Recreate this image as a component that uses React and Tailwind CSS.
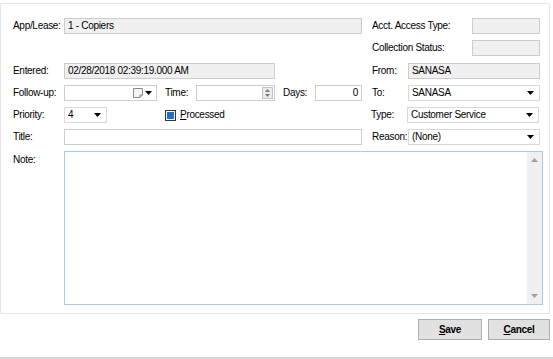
import React from "react";

const Arrow = () => (
  <svg width="7" height="4" viewBox="0 0 7 4" className="shrink-0">
    <path d="M0 0H7L3.5 4Z" fill="#000" />
  </svg>
);

function Label({ w, children, className = "" }) {
  return (
    <div className={`shrink-0 text-[#000] whitespace-nowrap ${className}`} style={{ width: w }}>
      {children}
    </div>
  );
}

function Box({ w, children, disabled, className = "" }) {
  return (
    <div
      className={`shrink-0 h-[16px] border flex items-center px-[3px] ${
        disabled ? "bg-[#f0f0f0] border-[#cccccc]" : "bg-white border-[#cdcdcd]"
      } ${className}`}
      style={{ width: w }}
    >
      {children}
    </div>
  );
}

function Select({ w, value }) {
  return (
    <div
      className="shrink-0 h-[16px] border border-[#d9d9d9] bg-white flex items-center justify-between pl-[3px] pr-[5px]"
      style={{ width: w }}
    >
      <span>{value}</span>
      <Arrow />
    </div>
  );
}

export default function App() {
  return (
    <div
      className="w-[553px] h-[359px] bg-white relative overflow-hidden text-[10px] leading-[12px] tracking-[-0.3px] text-black"
      style={{ fontFamily: "'Liberation Sans', Arial, sans-serif" }}
    >
      <div className="pt-[3px]">
        <div className="w-[550px] h-[311px] border border-[#dfe6ec] rounded-tr-[2px] pl-[12px] pt-[14px]">
          {/* Row 1 */}
          <div className="flex items-center h-[16px]">
            <Label w={51}>App/Lease:</Label>
            <Box w={298} disabled>1 - Copiers</Box>
            <Label w={100} className="ml-[10px]">Acct. Access Type:</Label>
            <Box w={68} disabled />
          </div>
          {/* Row 2 */}
          <div className="flex items-center h-[16px] mt-[6px]">
            <div className="w-[359px] shrink-0" />
            <Label w={100}>Collection Status:</Label>
            <Box w={68} disabled />
          </div>
          {/* Row 3 */}
          <div className="flex items-center h-[16px] mt-[7px]">
            <Label w={51}>Entered:</Label>
            <Box w={211} disabled>02/28/2018 02:39:19.000 AM</Box>
            <Label w={36} className="ml-[97px]">From:</Label>
            <Box w={132} disabled>SANASA</Box>
          </div>
          {/* Row 4 */}
          <div className="flex items-center h-[16px] mt-[6px]">
            <Label w={51}>Follow-up:</Label>
            <div className="shrink-0 h-[16px] w-[93px] border border-[#cdcdcd] bg-white flex items-center justify-end pr-[4px] gap-[2px]">
              <svg width="10" height="10" viewBox="0 0 10 10">
                <path d="M0.5 0.5H9.5V7L7 9.5H0.5Z" fill="#f4f4f4" stroke="#8a8a8a" />
                <path d="M7 9.5V7H9.5" fill="#d0d0d0" stroke="#8a8a8a" />
              </svg>
              <Arrow />
            </div>
            <Label w={31} className="ml-[8px]">Time:</Label>
            <div className="shrink-0 h-[16px] w-[79px] border border-[#cdcdcd] bg-white flex items-center justify-end pr-[1px]">
              <div className="w-[11px] h-[12px] bg-[#ececec] border border-[#c3c3c3] flex flex-col items-center justify-center gap-[2px]">
                <svg width="5" height="3" viewBox="0 0 5 3"><path d="M0 3H5L2.5 0Z" fill="#7a7a7a" /></svg>
                <svg width="5" height="3" viewBox="0 0 5 3"><path d="M0 0H5L2.5 3Z" fill="#7a7a7a" /></svg>
              </div>
            </div>
            <Label w={32} className="ml-[8px]">Days:</Label>
            <Box w={47} className="justify-end">0</Box>
            <Label w={36} className="ml-[10px]">To:</Label>
            <Select w={132} value="SANASA" />
          </div>
          {/* Row 5 */}
          <div className="flex items-center h-[16px] mt-[6px]">
            <Label w={51}>Priority:</Label>
            <Select w={43} value="4" />
            <div className="ml-[58px] flex items-center gap-[4px] w-[206px] shrink-0">
              <div className="w-[11px] h-[11px] border border-[#333] flex items-center justify-center bg-white">
                <div className="w-[7px] h-[7px] bg-[#1f6fc5]" />
              </div>
              <span>
                <span className="underline">P</span>rocessed
              </span>
            </div>
            <Label w={36}>Type:</Label>
            <Select w={132} value="Customer Service" />
          </div>
          {/* Row 6 */}
          <div className="flex items-center h-[16px] mt-[6px]">
            <Label w={51}>Title:</Label>
            <Box w={298} />
            <Label w={36} className="ml-[10px]">Reason:</Label>
            <Select w={132} value="(None)" />
          </div>
          {/* Row 7 */}
          <div className="flex mt-[6px]">
            <Label w={51} className="pt-[3px]">Note:</Label>
            <div className="w-[479px] h-[154px] border border-[#a9cbe9] bg-white flex justify-end">
              <div className="w-[15px] h-full bg-[#f0f0f0] flex flex-col items-center justify-between py-[6px]">
                <svg width="7" height="4" viewBox="0 0 7 4"><path d="M0 4H7L3.5 0Z" fill="#a0a0a0" /></svg>
                <svg width="7" height="4" viewBox="0 0 7 4"><path d="M0 0H7L3.5 4Z" fill="#a0a0a0" /></svg>
              </div>
            </div>
          </div>
        </div>
        {/* Buttons */}
        <div className="flex justify-end gap-[6px] pr-[3px] mt-[5px]">
          <button className="w-[64px] h-[21px] bg-[#e1e1e1] border border-[#adadad] font-bold text-[10px]">
            <span className="underline">S</span>ave
          </button>
          <button className="w-[62px] h-[21px] bg-[#e1e1e1] border border-[#adadad] font-bold text-[10px]">
            <span className="underline">C</span>ancel
          </button>
        </div>
      </div>
      <div className="absolute left-0 right-0 top-[357px] h-[2px] bg-[#d6d6d6]" />
    </div>
  );
}
